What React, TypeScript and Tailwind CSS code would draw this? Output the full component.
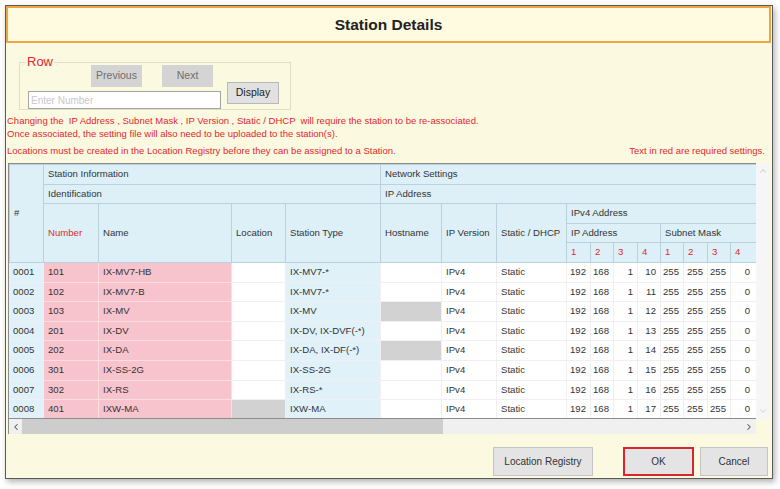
import { ChevronDown, ChevronLeft, ChevronRight, ChevronUp } from "lucide-react";

type Row = {
  id: string;
  number: string;
  name: string;
  type: string;
  hostGray?: boolean;
  locGray?: boolean;
  last: string;
};

const rows: Row[] = [
  { id: "0001", number: "101", name: "IX-MV7-HB", type: "IX-MV7-*", last: "10" },
  { id: "0002", number: "102", name: "IX-MV7-B", type: "IX-MV7-*", last: "11" },
  { id: "0003", number: "103", name: "IX-MV", type: "IX-MV", hostGray: true, last: "12" },
  { id: "0004", number: "201", name: "IX-DV", type: "IX-DV, IX-DVF(-*)", last: "13" },
  { id: "0005", number: "202", name: "IX-DA", type: "IX-DA, IX-DF(-*)", hostGray: true, last: "14" },
  { id: "0006", number: "301", name: "IX-SS-2G", type: "IX-SS-2G", last: "15" },
  { id: "0007", number: "302", name: "IX-RS", type: "IX-RS-*", last: "16" },
  { id: "0008", number: "401", name: "IXW-MA", type: "IXW-MA", locGray: true, last: "17" },
];

const colWidths = [34, 55, 133, 54, 95, 61, 55, 70, 24, 23, 24, 23, 23, 24, 23, 26];

const th = "border border-[#b9d1dc] bg-[#ddf0f8] px-1 text-left font-normal align-middle h-[19.6px]";
const td = "border border-[#f0f0f0] h-[19.6px] px-1 whitespace-nowrap";
const num = "border border-[#f0f0f0] h-[19.6px] pr-[4px] text-right whitespace-nowrap";

function GrayButton({ label, className }: { label: string; className?: string }) {
  return (
    <button className={`flex items-center justify-center bg-[#d4d4d4] text-[10.5px] text-[#6e6e6e] ${className ?? ""}`}>
      {label}
    </button>
  );
}

function FooterButton({ label, active }: { label: string; active?: boolean }) {
  return (
    <button
      className={`flex h-[29px] w-full items-center justify-center border bg-[#e4e4e4] text-[10px] text-[#333] ${
        active ? "border-2 border-[#d8262c]" : "border-[#c4c4c4]"
      }`}
    >
      {label}
    </button>
  );
}

export default function App() {
  return (
    <div className="h-[489px] w-[780px] bg-white pl-[5px] pt-[5px] font-['Liberation_Sans',Arial,sans-serif]">
      <div className="flex h-[474px] w-[768px] flex-col border border-[#5a5a5a] bg-[#fbfae0] shadow-[2px_3px_6px_rgba(0,0,0,0.3)]">
        {/* title */}
        <div className="mr-[1px] flex h-[37px] items-center justify-center border-2 border-[#efa544] bg-[#fffbe1]">
          <h1 className="text-[15.5px] font-bold text-[#222]">Station Details</h1>
        </div>

        {/* row selector */}
        <div className="relative ml-[13px] mt-[19px] flex w-[272px] items-end border border-[#e2dec4] pl-[8px]">
          <span className="absolute -top-[9px] left-[6px] bg-[#fbfae0] px-[1px] text-[13px] leading-[16px] text-[#e3262f]">
            Row
          </span>
          <div className="flex flex-col">
            <div className="ml-[63px] mt-[2px] flex gap-[20px]">
              <GrayButton label="Previous" className="h-[22px] w-[51px]" />
              <GrayButton label="Next" className="h-[22px] w-[51px]" />
            </div>
            <input
              className="mt-[4px] h-[18px] w-[193px] border border-[#a4a4a4] bg-white px-[2px] text-[10px] outline-none placeholder:text-[#c8c8c8]"
              placeholder="Enter Number"
            />
          </div>
          <button className="mb-[5px] ml-[6px] flex h-[22px] w-[52px] items-center justify-center border border-[#b8b8b8] bg-[#e1e1e1] text-[10.5px] text-[#222]">
            Display
          </button>
        </div>

        {/* notices */}
        <div className="mt-[4px] pl-[1px] pr-[7px] text-[9.5px] leading-[13px] text-[#e3262f]">
          <p className="whitespace-pre">
            Changing the  IP Address , Subnet Mask , IP Version , Static / DHCP  will require the station to be re-associated.
          </p>
          <p>Once associated, the setting file will also need to be uploaded to the station(s).</p>
          <div className="mt-[4px] flex justify-between">
            <p>Locations must be created in the Location Registry before they can be assigned to a Station.</p>
            <p>Text in red are required settings.</p>
          </div>
        </div>

        {/* table */}
        <div className="ml-[2px] mt-[6px] flex w-[762px] flex-col">
          <div className="flex h-[256px]">
            <div className="w-[748px] overflow-hidden border-y border-l border-[#8c8c8c] bg-white">
              <table className="w-[747px] table-fixed border-collapse text-[9.6px] text-[#333]">
                <colgroup>
                  {colWidths.map((w, i) => (
                    <col key={i} style={{ width: w }} />
                  ))}
                </colgroup>
                <thead>
                  <tr>
                    <th rowSpan={5} className={th}>
                      #
                    </th>
                    <th colSpan={4} className={th}>
                      Station Information
                    </th>
                    <th colSpan={11} className={th}>
                      Network Settings
                    </th>
                  </tr>
                  <tr>
                    <th colSpan={4} className={th}>
                      Identification
                    </th>
                    <th colSpan={11} className={th}>
                      IP Address
                    </th>
                  </tr>
                  <tr>
                    <th rowSpan={3} className={`${th} text-[#e3262f]`}>
                      Number
                    </th>
                    <th rowSpan={3} className={th}>
                      Name
                    </th>
                    <th rowSpan={3} className={th}>
                      Location
                    </th>
                    <th rowSpan={3} className={th}>
                      Station Type
                    </th>
                    <th rowSpan={3} className={th}>
                      Hostname
                    </th>
                    <th rowSpan={3} className={`${th} whitespace-nowrap`}>
                      IP Version
                    </th>
                    <th rowSpan={3} className={`${th} whitespace-nowrap`}>
                      Static / DHCP
                    </th>
                    <th colSpan={8} className={th}>
                      IPv4 Address
                    </th>
                  </tr>
                  <tr>
                    <th colSpan={4} className={th}>
                      IP Address
                    </th>
                    <th colSpan={4} className={th}>
                      Subnet Mask
                    </th>
                  </tr>
                  <tr>
                    {["1", "2", "3", "4", "1", "2", "3", "4"].map((n, i) => (
                      <th key={i} className={`${th} text-[#e3262f]`}>
                        {n}
                      </th>
                    ))}
                  </tr>
                </thead>
                <tbody>
                  {rows.map((r) => (
                    <tr key={r.id}>
                      <td className={`${td} bg-[#e0f1f9] pl-[3px]`}>{r.id}</td>
                      <td className={`${td} border-[#fbdde2] bg-[#f7c3cc]`}>{r.number}</td>
                      <td className={`${td} border-[#fbdde2] bg-[#f7c3cc]`}>{r.name}</td>
                      <td className={`${td} ${r.locGray ? "bg-[#d2d2d2]" : "bg-white"}`}></td>
                      <td className={`${td} bg-[#e0f1f9]`}>{r.type}</td>
                      <td className={`${td} ${r.hostGray ? "bg-[#d2d2d2]" : "bg-white"}`}></td>
                      <td className={td}>IPv4</td>
                      <td className={td}>Static</td>
                      <td className={num}>192</td>
                      <td className={num}>168</td>
                      <td className={num}>1</td>
                      <td className={num}>{r.last}</td>
                      <td className={num}>255</td>
                      <td className={num}>255</td>
                      <td className={num}>255</td>
                      <td className={`${num} pr-[6px]`}>0</td>
                    </tr>
                  ))}
                </tbody>
              </table>
            </div>
            <div className="flex w-[14px] flex-col items-center justify-between bg-[#f6f6f6] py-[3px]">
              <ChevronUp size={10} strokeWidth={2} className="text-[#b8b8b8]" />
              <ChevronDown size={10} strokeWidth={2} className="text-[#c8c8c8]" />
            </div>
          </div>
          <div className="flex h-[15px] w-[748px] items-center border-l border-[#8c8c8c] bg-[#f0f0f0]">
            <div className="flex w-[13px] items-center justify-center">
              <ChevronLeft size={10} strokeWidth={2.5} className="text-[#555]" />
            </div>
            <div className="h-full w-[421px] bg-[#cdcdcd]" />
            <div className="flex-1" />
            <div className="flex w-[14px] items-center justify-center">
              <ChevronRight size={10} strokeWidth={2.5} className="text-[#555]" />
            </div>
          </div>
        </div>

        {/* footer */}
        <div className="mt-[13px] flex justify-end pr-[4px]">
          <div className="w-[100px]">
            <FooterButton label="Location Registry" />
          </div>
          <div className="ml-[30px] w-[71px]">
            <FooterButton label="OK" active />
          </div>
          <div className="ml-[6px] w-[68px]">
            <FooterButton label="Cancel" />
          </div>
        </div>
      </div>
    </div>
  );
}
